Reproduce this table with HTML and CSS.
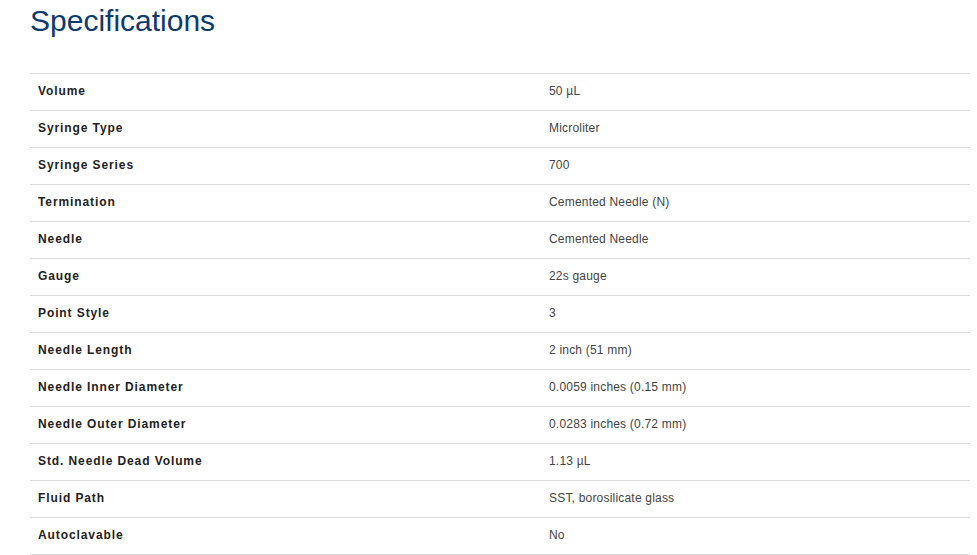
FILE: index.html
```html
<!DOCTYPE html>
<html>
<head>
<meta charset="utf-8">
<link rel="stylesheet" href="styles.css">
</head>
<body>
<div class="page">
  <h1 class="title">Specifications</h1>
  <table class="specs">
    <tr><th>Volume</th><td>50 µL</td></tr>
    <tr><th>Syringe Type</th><td>Microliter</td></tr>
    <tr><th>Syringe Series</th><td>700</td></tr>
    <tr><th>Termination</th><td>Cemented Needle (N)</td></tr>
    <tr><th>Needle</th><td>Cemented Needle</td></tr>
    <tr><th>Gauge</th><td>22s gauge</td></tr>
    <tr><th>Point Style</th><td>3</td></tr>
    <tr><th>Needle Length</th><td>2 inch (51 mm)</td></tr>
    <tr><th>Needle Inner Diameter</th><td>0.0059 inches (0.15 mm)</td></tr>
    <tr><th>Needle Outer Diameter</th><td>0.0283 inches (0.72 mm)</td></tr>
    <tr><th>Std. Needle Dead Volume</th><td>1.13 µL</td></tr>
    <tr><th>Fluid Path</th><td>SST, borosilicate glass</td></tr>
    <tr><th>Autoclavable</th><td>No</td></tr>
  </table>
</div>
</body>
</html>
```
FILE: styles.css
```css
html, body {
  margin: 0;
  padding: 0;
  background: #fff;
}
body {
  font-family: "Liberation Sans", Arial, sans-serif;
}
.page {
  padding: 0 7px 0 30px;
}
.title {
  margin: 0;
  padding-top: 3px;
  font-size: 30px;
  font-weight: normal;
  line-height: 36px;
  color: #0b3b6e;
  height: 70px;
}
.specs {
  width: 100%;
  border-collapse: collapse;
  font-size: 12px;
}
.specs tr {
  border-top: 1px solid #dcdcdc;
  border-bottom: 1px solid #dcdcdc;
}
.specs th, .specs td {
  height: 37px;
  padding: 0 8px 2px;
  text-align: left;
  vertical-align: middle;
  box-sizing: border-box;
}
.specs th {
  width: 511px;
  font-weight: bold;
  color: #222;
  letter-spacing: 0.9px;
}
.specs td {
  color: #444;
  letter-spacing: 0.2px;
}
```
